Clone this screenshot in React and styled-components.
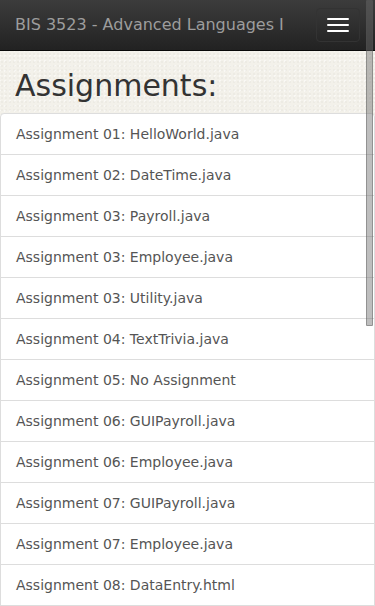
import styled, { createGlobalStyle } from "styled-components";

const GlobalStyle = createGlobalStyle`
  html, body {
    margin: 0;
    padding: 0;
    height: 100%;
    overflow: hidden;
  }
  body {
    font-family: "DejaVu Sans", "Liberation Sans", sans-serif;
    font-size: 14px;
    line-height: 1.42857;
    color: #333;
    background-color: #f3f1ea;
    background-image:
      radial-gradient(rgba(0, 0, 0, 0.025) 1px, transparent 1px),
      radial-gradient(rgba(255, 255, 255, 0.5) 1px, transparent 1px);
    background-size: 4px 4px, 5px 5px;
    background-position: 0 0, 2px 3px;
  }
  * {
    box-sizing: border-box;
  }
`;

const Navbar = styled.nav`
  height: 51px;
  display: flex;
  align-items: center;
  justify-content: space-between;
  padding: 0 15px;
  background-image: linear-gradient(to bottom, #3c3c3c 0%, #222 100%);
  border-bottom: 1px solid #080808;
`;

const Brand = styled.a`
  font-size: 16px;
  line-height: 20px;
  color: #9d9d9d;
  text-decoration: none;
  white-space: nowrap;
`;

const Toggle = styled.button`
  width: 44px;
  height: 34px;
  padding: 9px 10px;
  display: flex;
  flex-direction: column;
  gap: 4px;
  background: transparent;
  border: 1px solid #333;
  border-radius: 4px;
`;

const IconBar = styled.span`
  display: block;
  width: 22px;
  height: 2px;
  background-color: #fff;
  border-radius: 1px;
`;

const Page = styled.main`
  padding-top: 18px;
`;

const Heading = styled.h1`
  margin: 0 0 11px;
  padding: 0 15px;
  font-size: 30px;
  font-weight: 500;
  line-height: 1.1;
  color: #333;
`;

const ListGroup = styled.div`
  display: flex;
  flex-direction: column;
`;

const ListItem = styled.a`
  display: block;
  padding: 10px 15px;
  margin-bottom: -1px;
  background-color: #fff;
  border: 1px solid #ddd;
  color: #555;
  line-height: 20px;
  text-decoration: none;

  &:first-child {
    border-top-left-radius: 4px;
    border-top-right-radius: 4px;
  }
`;

const ScrollThumb = styled.div`
  position: fixed;
  top: 0;
  right: 2px;
  width: 7px;
  height: 326px;
  background-color: rgba(110, 110, 110, 0.45);
  border: 1px solid rgba(80, 80, 80, 0.4);
  border-radius: 1px;
`;

const assignments = [
  "Assignment 01: HelloWorld.java",
  "Assignment 02: DateTime.java",
  "Assignment 03: Payroll.java",
  "Assignment 03: Employee.java",
  "Assignment 03: Utility.java",
  "Assignment 04: TextTrivia.java",
  "Assignment 05: No Assignment",
  "Assignment 06: GUIPayroll.java",
  "Assignment 06: Employee.java",
  "Assignment 07: GUIPayroll.java",
  "Assignment 07: Employee.java",
  "Assignment 08: DataEntry.html",
];

function App() {
  return (
    <>
      <GlobalStyle />
      <Navbar>
        <Brand href="#">BIS 3523 - Advanced Languages I</Brand>
        <Toggle aria-label="Toggle navigation">
          <IconBar />
          <IconBar />
          <IconBar />
        </Toggle>
      </Navbar>
      <Page>
        <Heading>Assignments:</Heading>
        <ListGroup>
          {assignments.map((item, i) => (
            <ListItem key={i} href="#">
              {item}
            </ListItem>
          ))}
        </ListGroup>
      </Page>
      <ScrollThumb />
    </>
  );
}

export default App;
